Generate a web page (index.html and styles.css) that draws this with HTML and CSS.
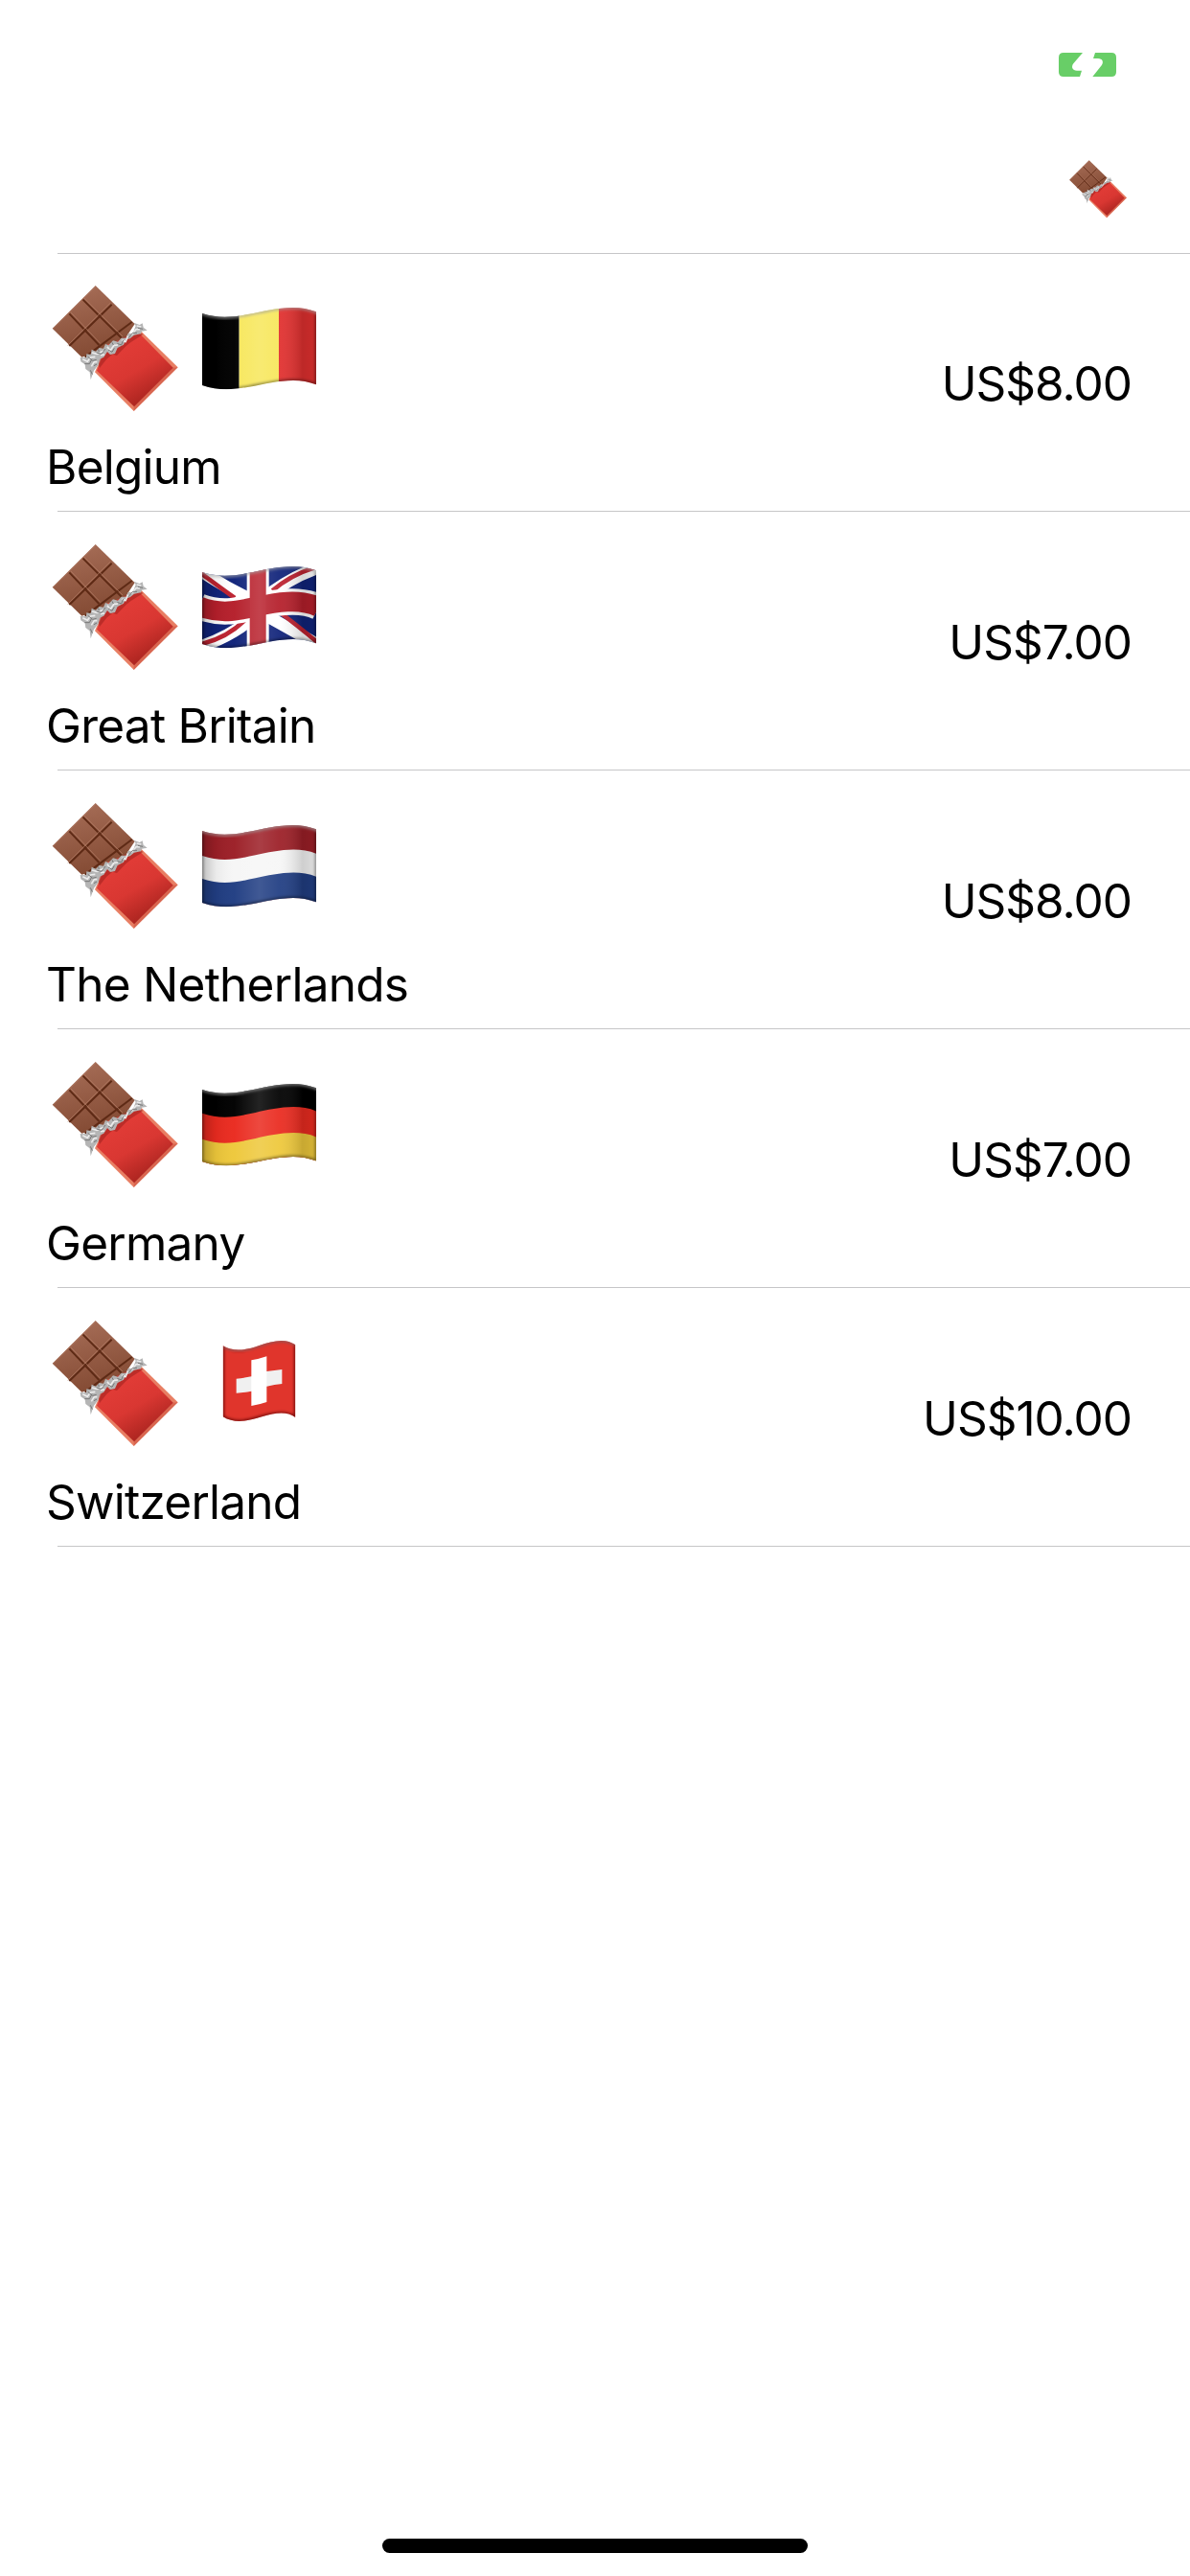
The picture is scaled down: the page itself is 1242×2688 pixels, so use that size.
FILE: index.html
```html
<!DOCTYPE html>
<html lang="en">
<head>
<meta charset="utf-8">
<title>Chocolate</title>
<link rel="stylesheet" href="styles.css">
</head>
<body>
<svg class="defs" width="0" height="0" aria-hidden="true">
  <defs>
    <linearGradient id="cocoa" x1="0" y1="0" x2="0.3" y2="1"><stop offset="0" stop-color="#a9705a"/><stop offset="1" stop-color="#854c35"/></linearGradient>
    <linearGradient id="wrap" gradientUnits="userSpaceOnUse" x1="250" y1="240" x2="350" y2="410"><stop offset="0" stop-color="#e23c37"/><stop offset=".5" stop-color="#d93732"/><stop offset="1" stop-color="#aa241f"/></linearGradient>
    <linearGradient id="sheen" x1="0" y1="0" x2="1" y2="0"><stop offset="0" stop-color="#000" stop-opacity=".22"/><stop offset=".12" stop-color="#000" stop-opacity=".05"/><stop offset=".28" stop-color="#fff" stop-opacity=".02"/><stop offset=".5" stop-color="#fff" stop-opacity=".14"/><stop offset=".68" stop-color="#fff" stop-opacity=".06"/><stop offset=".88" stop-color="#000" stop-opacity=".16"/><stop offset="1" stop-color="#000" stop-opacity=".1"/></linearGradient>
    <filter id="soft" x="-10%" y="-20%" width="120%" height="140%"><feGaussianBlur stdDeviation="4"/></filter>
    <path id="wave" d="M505 138C570 163 620 152 680 139C740 125 820 110 878 140"/>
    <path id="flag" d="M513 141C565 158 610 153 660 143C730 129 805 109 870 136V364C805 337 735 357 660 371C610 380 565 384 513 366Z"/>
    <path id="square" d="M578 133C612 153 650 147 692 132S775 108 805 130V357C780 338 745 341 700 355S615 378 578 355Z"/>
    <clipPath id="flagclip"><use href="#flag"/></clipPath>
    <clipPath id="squareclip"><use href="#square"/></clipPath>
    <g id="shade">
      <use href="#flag" fill="url(#sheen)"/>
      <use href="#flag" fill="none" stroke="#000" stroke-opacity=".5" stroke-width="7" filter="url(#soft)"/>
      <use href="#wave" fill="none" stroke="#fff" stroke-opacity=".45" stroke-width="10" filter="url(#soft)"/>
    </g>
    <symbol id="chocolate" viewBox="30 39 420 420">
      <path fill="url(#cocoa)" d="M179 54L302 174L260 238L136 278L44 188Z"/>
      <g fill="none" stroke="#5e2a15" stroke-width="6">
        <path d="M139 97L260 218M97 243L230 113M146 278L293 168M97 142L190 240"/>
      </g>
      <g fill="none" stroke="#b57f68" stroke-width="2">
        <path d="M144 94L264 213M102 138L194 235M92 241L225 109M179 57L48 187"/>
      </g>
      <path fill="#e87e63" d="M322 197L437 310L299 447L177 325L215 240Z"/>
      <path fill="#c94e3e" d="M421 311L437 310L299 447L299 432Z" opacity=".5"/>
      <path fill="url(#wrap)" d="M316 203L422 311L300 433L183 320L215 240Z"/>
      <path fill="#9f211e" opacity=".55" d="M192 312L214 284L232 269L246 273L275 243L289 232L328 207L310 195L220 240L184 285Z"/>
      <path fill="#b5b5b5" d="M131 279L150 280L151 268L164 270L167 254L180 260L191 249L204 251L210 237L220 241L234 226L249 230L260 218L275 218L281 204L296 203L305 180L299 170L317 177L326 172L329 185L341 194L324 197L321 205L300 209L287 220L274 223L267 239L248 249L240 267L225 270L216 261L205 278L192 284L188 302L174 320L164 349L161 325L148 315L146 301L133 292Z"/>
      <g fill="none" stroke="#ececec" stroke-width="5" stroke-linejoin="round">
        <path d="M139 284L154 292L163 279L178 277M168 264L184 268L205 259M216 245L225 258L237 241L249 240M262 225L273 230L281 212M291 209L306 191L318 191M166 307L175 293L184 293M195 272L207 270M308 180L322 183"/>
      </g>
      <g fill="none" stroke="#777" stroke-width="3">
        <path d="M145 299L160 299L168 284M155 277L170 289L182 286M182 264L198 268L210 252M219 255L231 262L238 250M247 235L260 240L266 225M282 218L296 202L309 202M163 319L169 332M312 187L327 190M188 253L190 262M231 232L235 240M174 305L183 300"/>
      </g>
    </symbol>
    <symbol id="be" viewBox="510 114 363 276">
      <g clip-path="url(#flagclip)"><path d="M510 110H629V390H510Z"/><path fill="#f7e75b" d="M629 110H753V390H629Z"/><path fill="#e1302f" d="M753 110H873V390H753Z"/><use href="#shade"/></g>
    </symbol>
    <symbol id="gb" viewBox="510 114 363 276">
      <g clip-path="url(#flagclip)">
        <path fill="#10237a" d="M510 110H873V390H510Z"/>
        <g fill="none" stroke="#fff" stroke-width="38"><path d="M505 135Q590 192 670 228M505 374Q600 345 680 278M878 127Q790 156 700 227M878 370Q800 325 710 275"/></g>
        <g fill="none" stroke="#bd2230" stroke-width="14"><path d="M507 143Q570 190 615 222M507 367Q590 348 648 290M865 127Q790 150 733 199M874 361Q810 307 752 264"/></g>
        <path fill="#fff" d="M653 110H722V390H653Z"/>
        <use href="#wave" transform="translate(0 111)" fill="none" stroke="#fff" stroke-width="82"/>
        <use href="#wave" transform="translate(0 111)" fill="none" stroke="#b51f2b" stroke-width="62"/>
        <path fill="#b9232f" d="M662 110H713V390H662Z"/>
        <use href="#shade"/>
      </g>
    </symbol>
    <symbol id="nl" viewBox="510 114 363 276">
      <g clip-path="url(#flagclip)"><path fill="#9c1f27" d="M510 110H873V390H510Z"/><path fill="#f6f6f6" d="M505 216C570 241 620 230 680 217C740 203 820 186 878 216V400H505Z"/><path fill="#213e83" d="M505 288C570 313 620 302 680 289C740 275 820 258 878 288V400H505Z"/><use href="#shade"/></g>
    </symbol>
    <symbol id="de" viewBox="510 114 363 276">
      <g clip-path="url(#flagclip)"><path d="M510 110H873V390H510Z"/><path fill="#ea2b20" d="M505 212C570 237 620 226 680 213C740 199 820 182 878 212V400H505Z"/><path fill="#eec83b" d="M505 293C570 318 620 307 680 294C740 280 820 263 878 293V400H505Z"/><use href="#shade"/></g>
    </symbol>
    <symbol id="ch" viewBox="510 114 363 276">
      <g clip-path="url(#squareclip)">
        <path fill="#e0352c" d="M510 110H873V390H510Z"/>
        <path fill="#fff" d="M667 178Q692 174 715 166V213Q740 210 763 207V252Q740 254 715 260V309Q692 317 667 321V275Q643 280 620 281V236Q643 234 667 229Z"/>
        <path fill="#000" opacity=".06" d="M620 236L667 229V275L620 281ZM715 213L763 207V252L715 260Z"/>
        <use href="#square" fill="none" stroke="#500" stroke-opacity=".85" stroke-width="8" filter="url(#soft)"/>
        <path d="M578 133C612 153 650 147 692 132S775 108 805 130" fill="none" stroke="#fff" stroke-opacity=".35" stroke-width="8" filter="url(#soft)"/>
      </g>
    </symbol>
  </defs>
</svg>
<div class="screen">
  <header class="status">
    <svg class="battery" viewBox="135 75 180 75"><path fill="#68ce67" d="M150 75H210L181 109C173 120 178 131 192 131H207L201 150H150Q135 150 135 135V90Q135 75 150 75ZM249 75H300Q315 75 315 90V135Q315 150 300 150H241L269 115C277 104 272 93 258 93H243Z"/></svg>
  </header>
  <nav class="navbar"><svg class="nav-icon"><use href="#chocolate"/></svg></nav>
  <main class="list">
    <section class="row"><div class="product"><div class="icons"><svg class="bar"><use href="#chocolate"/></svg><svg class="flag"><use href="#be"/></svg></div><span class="name">Belgium</span></div><span class="price">US$8.00</span></section>
    <section class="row"><div class="product"><div class="icons"><svg class="bar"><use href="#chocolate"/></svg><svg class="flag"><use href="#gb"/></svg></div><span class="name">Great Britain</span></div><span class="price">US$7.00</span></section>
    <section class="row"><div class="product"><div class="icons"><svg class="bar"><use href="#chocolate"/></svg><svg class="flag"><use href="#nl"/></svg></div><span class="name">The Netherlands</span></div><span class="price">US$8.00</span></section>
    <section class="row"><div class="product"><div class="icons"><svg class="bar"><use href="#chocolate"/></svg><svg class="flag"><use href="#de"/></svg></div><span class="name">Germany</span></div><span class="price">US$7.00</span></section>
    <section class="row"><div class="product"><div class="icons"><svg class="bar"><use href="#chocolate"/></svg><svg class="flag"><use href="#ch"/></svg></div><span class="name">Switzerland</span></div><span class="price">US$10.00</span></section>
  </main>
  <footer class="home"><div class="home-bar"></div></footer>
</div>
</body>
</html>
```
FILE: styles.css
```css
* { box-sizing: border-box; }
body { margin: 0; background: #fff; color: #000; font-family: Inter, "Liberation Sans", sans-serif; }
svg { display: block; flex: none; }
.defs { position: absolute; }
.screen { width: 1242px; height: 2688px; display: flex; flex-direction: column; }
.status { height: 132px; display: flex; justify-content: flex-end; padding: 55px 77px 0 0; }
.battery { width: 60px; height: 25px; }
.navbar { height: 132px; display: flex; justify-content: flex-end; padding: 33px 64px 0 0; }
.nav-icon { width: 64px; height: 64px; }
.list { display: flex; flex-direction: column; background: linear-gradient(#c6c6c8, #c6c6c8) 60px 0 / 1182px 1px no-repeat; }
.row { height: 270px; padding: 29px 61px 0 48px; display: flex; justify-content: space-between; background: linear-gradient(#c6c6c8, #c6c6c8) 60px 100% / 1182px 1px no-repeat; }
/* the first row shares its top pixel with the list's upper separator */
.row:first-child { height: 270px; }
.product { display: flex; flex-direction: column; }
.icons { display: flex; gap: 20px; padding-left: 2px; height: 164px; }
.bar { width: 140px; height: 140px; }
.flag { width: 121px; height: 92px; margin-top: 25px; }
.name, .price { font-size: 49.5px; line-height: 60px; white-space: nowrap; }
.name { letter-spacing: -0.75px; }
.price { margin-top: 77px; letter-spacing: -1px; }
.home { margin-top: auto; height: 39px; display: flex; justify-content: center; }
.home-bar { width: 444px; height: 15px; border-radius: 8px; background: #000; }
```
